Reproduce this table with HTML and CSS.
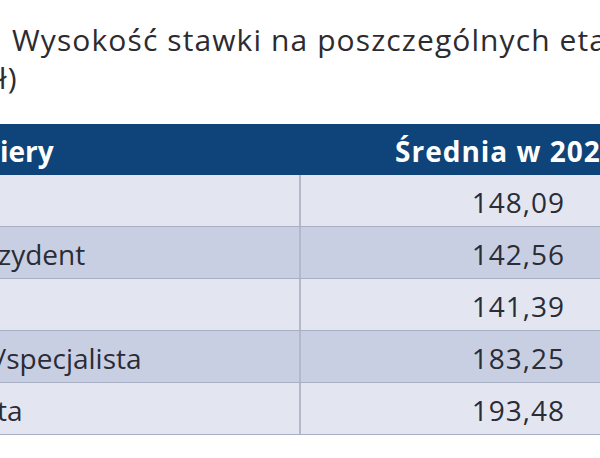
FILE: index.html
```html
<!DOCTYPE html>
<html lang="pl">
<head>
<meta charset="utf-8">
<title>Wysokość stawki</title>
<link rel="stylesheet" href="styles.css">
</head>
<body>
<div class="page">
  <div class="title">
    <div class="title-line first">Wysokość stawki na poszczególnych etapach</div>
    <div class="title-line second"><span class="cut">ł)</span></div>
  </div>
  <div class="table">
    <div class="row head">
      <div class="cell label"><span class="cut c0">iery</span></div>
      <div class="cell value head-value">Średnia w 2023 r.</div>
    </div>
    <div class="row light">
      <div class="cell label"></div>
      <div class="cell value num">148,09</div>
    </div>
    <div class="row dark">
      <div class="cell label"><span class="cut c2">zydent</span></div>
      <div class="cell value num">142,56</div>
    </div>
    <div class="row light">
      <div class="cell label"></div>
      <div class="cell value num">141,39</div>
    </div>
    <div class="row dark">
      <div class="cell label"><span class="cut c4">/specjalista</span></div>
      <div class="cell value num">183,25</div>
    </div>
    <div class="row light last">
      <div class="cell label"><span class="cut c3">ta</span></div>
      <div class="cell value num">193,48</div>
    </div>
  </div>
</div>
</body>
</html>
```

FILE: styles.css
```css
html, body {
  margin: 0;
  padding: 0;
  background: #ffffff;
}

body {
  width: 600px;
  height: 458px;
  overflow: hidden;
  font-family: "Open Sans", "Noto Sans", sans-serif;
  color: #2a2c36;
}

.page {
  width: 600px;
  overflow: hidden;
}

.title {
  padding-top: 21px;
  padding-bottom: 27px;
  font-size: 30px;
  line-height: 38px;
  font-weight: 400;
  letter-spacing: 1.1px;
  color: #2c2c30;
}

.title-line {
  white-space: nowrap;
  overflow: hidden;
}

.title-line.first {
  padding-left: 12px;
}

.cut {
  display: inline-block;
  white-space: nowrap;
}

.second .cut {
  margin-left: -1px;
}

.table {
  display: flex;
  flex-direction: column;
  width: 600px;
}

.row {
  display: grid;
  grid-template-columns: 299px 301px;
  height: 52px;
  box-sizing: border-box;
  border-bottom: 1px solid #a9afc2;
}

.row.head {
  height: 51px;
  background: #0e4479;
  color: #ffffff;
  font-weight: 700;
  border-bottom: none;
}

.row.light {
  background: #e3e6f1;
}

.row.dark {
  background: #c9cfe2;
}

.cell {
  display: flex;
  align-items: center;
  font-size: 28px;
  line-height: 36px;
  padding-top: 3px;
  overflow: hidden;
  white-space: nowrap;
  box-sizing: border-box;
}

.label {
  padding-left: 0;
}

.row:not(.head) .value {
  border-left: 2px solid #b3b8ca;
}

.num {
  justify-content: flex-end;
  padding-right: 35px;
  letter-spacing: 1px;
}

.head-value {
  padding-left: 96px;
  letter-spacing: 1px;
}

.c0 { margin-left: 0; }
.c2 { margin-left: -2px; }
.c3 { margin-left: -3px; }
.c4 { margin-left: -4px; }
```
